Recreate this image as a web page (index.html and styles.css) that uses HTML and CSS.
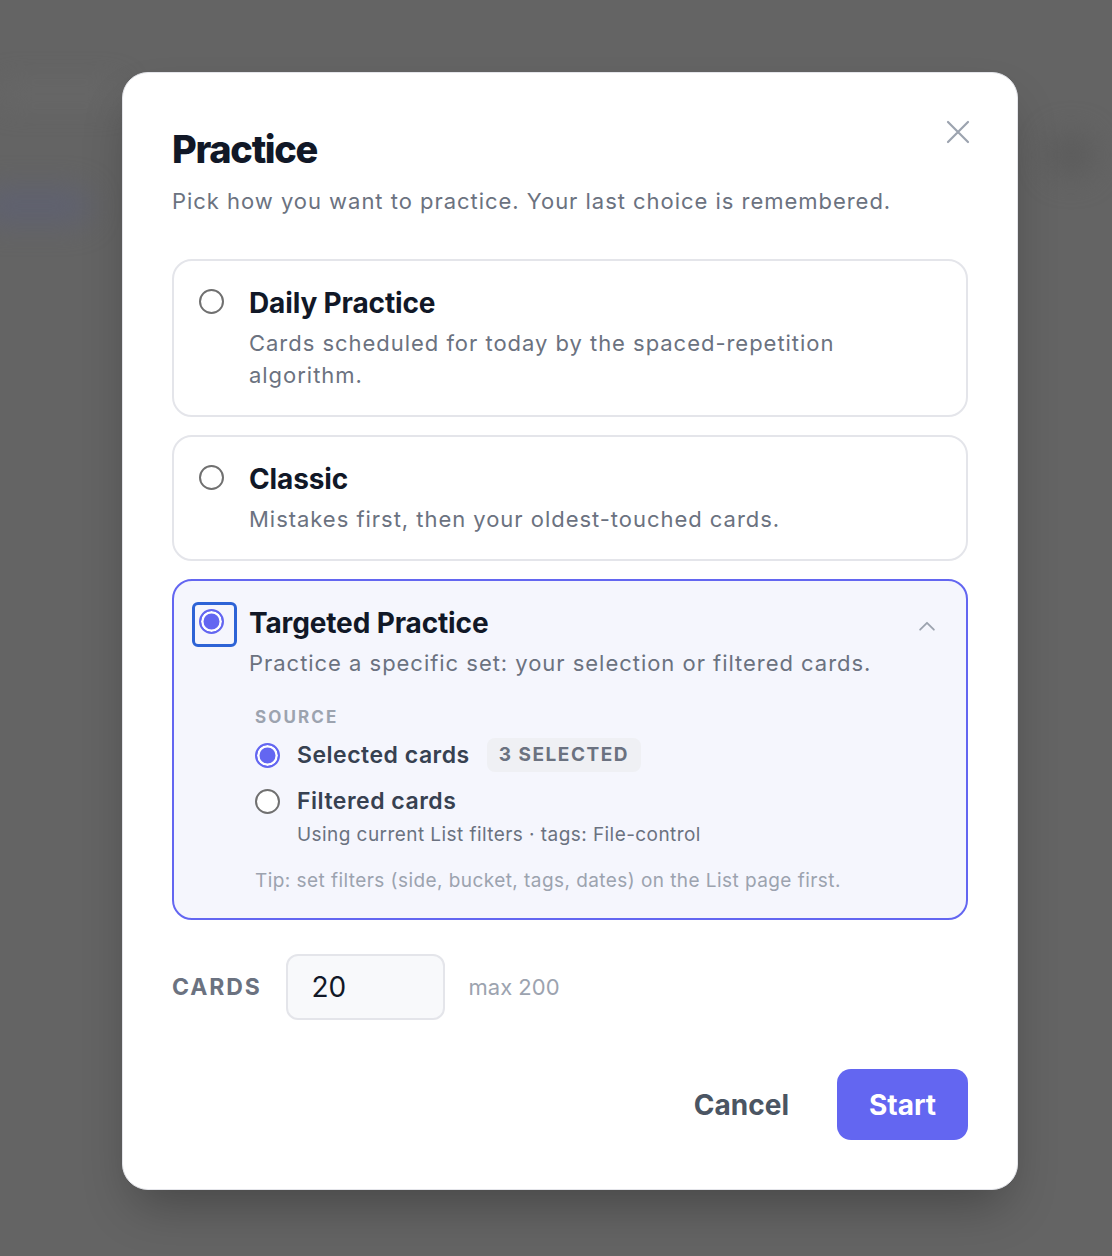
FILE: index.html
```html
<!DOCTYPE html>
<html lang="en">
<head>
<meta charset="utf-8">
<title>Practice</title>
<link rel="stylesheet" href="styles.css">
</head>
<body>
<div class="backdrop">
  <div class="blob blob-left"></div>
  <div class="blob blob-right"></div>
  <div class="blob blob-top"></div>

  <div class="modal" role="dialog" aria-labelledby="dlg-title">
    <button class="close" aria-label="Close">
      <svg viewBox="0 0 24 24" width="24" height="24"><path d="M2 2L22 22M22 2L2 22" fill="none" stroke="#9ca3af" stroke-width="2.2" stroke-linecap="round"/></svg>
    </button>

    <h1 class="title" id="dlg-title">Practice</h1>
    <p class="subtitle">Pick how you want to practice. Your last choice is remembered.</p>

    <div class="options">
      <div class="card">
        <div class="radio-col"><span class="radio"></span></div>
        <div class="card-body">
          <div class="card-title">Daily Practice</div>
          <div class="card-desc">Cards scheduled for today by the spaced-repetition algorithm.</div>
        </div>
        <div class="chev-col"></div>
      </div>

      <div class="card">
        <div class="radio-col"><span class="radio"></span></div>
        <div class="card-body">
          <div class="card-title">Classic</div>
          <div class="card-desc">Mistakes first, then your oldest-touched cards.</div>
        </div>
        <div class="chev-col"></div>
      </div>

      <div class="card active">
        <div class="radio-col"><span class="radio checked focus"></span></div>
        <div class="card-body">
          <div class="card-title">Targeted Practice</div>
          <div class="card-desc">Practice a specific set: your selection or filtered cards.</div>

          <div class="source">
            <div class="source-label">Source</div>
            <div class="src-row first">
              <span class="radio checked"></span>
              <span class="src-name">Selected cards</span>
              <span class="badge">3 selected</span>
            </div>
            <div class="src-row second">
              <span class="radio"></span>
              <span class="src-name">Filtered cards</span>
            </div>
            <div class="src-sub">Using current List filters · tags: File-control</div>
            <div class="tip">Tip: set filters (side, bucket, tags, dates) on the List page first.</div>
          </div>
        </div>
        <div class="chev-col">
          <svg class="chev" viewBox="0 0 24 24" width="24" height="24"><path d="M4.5 16L12 8.5L19.5 16" fill="none" stroke="#9ca3af" stroke-width="2" stroke-linecap="round" stroke-linejoin="round"/></svg>
        </div>
      </div>
    </div>

    <div class="count-row">
      <span class="count-label">Cards</span>
      <input class="count-input" type="text" value="20">
      <span class="count-max">max 200</span>
    </div>

    <div class="actions">
      <button class="btn btn-cancel">Cancel</button>
      <button class="btn btn-start">Start</button>
    </div>
  </div>
</div>
</body>
</html>
```
FILE: styles.css
```css
* { box-sizing: border-box; }

html, body {
  margin: 0;
  padding: 0;
}

body {
  font-family: Inter, "Noto Sans", "Liberation Sans", sans-serif;
  background: #646464;
}

.backdrop {
  position: relative;
  min-height: 1256px;
  overflow: hidden;
  background: #646464;
  padding: 72px 0 0 122px;
}

.blob {
  position: absolute;
  filter: blur(14px);
  border-radius: 30px;
}
.blob-left {
  left: -20px;
  top: 188px;
  width: 110px;
  height: 36px;
  background: #5f6170;
}
.blob-right {
  left: 1048px;
  top: 132px;
  width: 46px;
  height: 46px;
  border-radius: 50%;
  background: #5c5c5c;
}
.blob-top {
  left: 0;
  top: 84px;
  width: 120px;
  height: 20px;
  background: #686868;
}

.modal {
  position: relative;
  width: 896px;
  background: #ffffff;
  border: 1px solid #e4e5ea;
  border-radius: 26px;
  padding: 54px 49px 49px;
  box-shadow: 0 25px 50px -12px rgba(0, 0, 0, 0.3);
}

.close {
  position: absolute;
  top: 47px;
  right: 47px;
  width: 24px;
  height: 24px;
  padding: 0;
  border: 0;
  background: none;
  display: block;
}
.close svg { display: block; }

.title {
  margin: 0;
  font-size: 38px;
  line-height: 44px;
  font-weight: 800;
  letter-spacing: -0.035em;
  color: #111827;
}

.subtitle {
  margin: 14px 0 0;
  font-size: 22px;
  line-height: 32px;
  letter-spacing: 0.044em;
  color: #6b7280;
}

.options {
  margin-top: 42px;
  display: flex;
  flex-direction: column;
  gap: 18px;
}

.card {
  display: grid;
  grid-template-columns: 25px 1fr 24px;
  column-gap: 24px;
  padding: 24px 26px 24px 26px;
  border: 2px solid #e4e5ea;
  border-radius: 20px;
  background: #ffffff;
}
.card.active {
  border-color: #6366f1;
  background: #f5f6fd;
}

.radio-col {
  height: 36px;
  display: flex;
  align-items: center;
  margin-left: -1px;
  margin-top: -2px;
}

.radio {
  position: relative;
  display: inline-block;
  flex: none;
  width: 25px;
  height: 25px;
  border-radius: 50%;
  border: 2px solid #707070;
  background: #ffffff;
}
.radio.checked {
  border-color: #6366f1;
  background: #6366f1;
  box-shadow: inset 0 0 0 2.5px #ffffff;
}
.radio.focus::after {
  content: "";
  position: absolute;
  left: -9px;
  top: -9px;
  width: 39px;
  height: 39px;
  border: 3px solid #2d63d6;
  border-radius: 6px;
}

.card-title {
  font-size: 28px;
  line-height: 36px;
  font-weight: 700;
  letter-spacing: -0.005em;
  color: #111827;
}

.card-desc {
  margin-top: 6px;
  font-size: 22px;
  line-height: 32px;
  letter-spacing: 0.044em;
  color: #6b7280;
}

.chev-col {
  display: flex;
  justify-content: flex-end;
}
.chev {
  display: block;
  margin-top: 9px;
  margin-right: 2px;
}

.source {
  margin: 26px 0 0 6px;
}

.source-label {
  font-size: 17px;
  line-height: 24px;
  font-weight: 700;
  letter-spacing: 0.125em;
  text-transform: uppercase;
  color: #9ca3af;
}

.src-row {
  display: flex;
  align-items: center;
  gap: 17px;
}
.src-row.first {
  margin-top: 9px;
  height: 34px;
}
.src-row.second {
  margin-top: 13px;
  height: 32px;
}

.src-name {
  font-size: 23px;
  line-height: 32px;
  font-weight: 600;
  letter-spacing: 0.022em;
  color: #374151;
}

.badge {
  height: 34px;
  padding: 0 12px;
  border-radius: 8px;
  background: #eff0f4;
  font-size: 19px;
  line-height: 34px;
  font-weight: 700;
  letter-spacing: 0.08em;
  text-transform: uppercase;
  color: #6b7280;
}

.src-sub {
  margin: 5px 0 0 42px;
  font-size: 19px;
  line-height: 26px;
  letter-spacing: 0.023em;
  color: #6b7280;
}

.tip {
  margin-top: 20px;
  font-size: 19px;
  line-height: 26px;
  letter-spacing: 0.023em;
  color: #9ca3af;
}

.count-row {
  margin-top: 34px;
  display: flex;
  align-items: center;
  gap: 24px;
}

.count-label {
  font-size: 23px;
  font-weight: 700;
  letter-spacing: 0.08em;
  text-transform: uppercase;
  color: #6b7280;
}

.count-input {
  width: 159px;
  height: 66px;
  padding: 0 0 0 24px;
  border: 2px solid #e4e5ea;
  border-radius: 12px;
  background: #f8f9fb;
  font-family: inherit;
  font-size: 28px;
  color: #111827;
  outline: none;
}

.count-max {
  font-size: 22px;
  color: #9ca3af;
}

.actions {
  margin-top: 49px;
  display: flex;
  justify-content: flex-end;
  gap: 24px;
}

.btn {
  height: 71px;
  border: 0;
  border-radius: 14px;
  font-family: inherit;
  font-size: 28px;
  font-weight: 700;
  cursor: pointer;
}

.btn-cancel {
  padding: 0 24px;
  background: transparent;
  color: #4b5563;
}

.btn-start {
  width: 131px;
  padding: 0;
  background: #6366f1;
  color: #ffffff;
}
```
